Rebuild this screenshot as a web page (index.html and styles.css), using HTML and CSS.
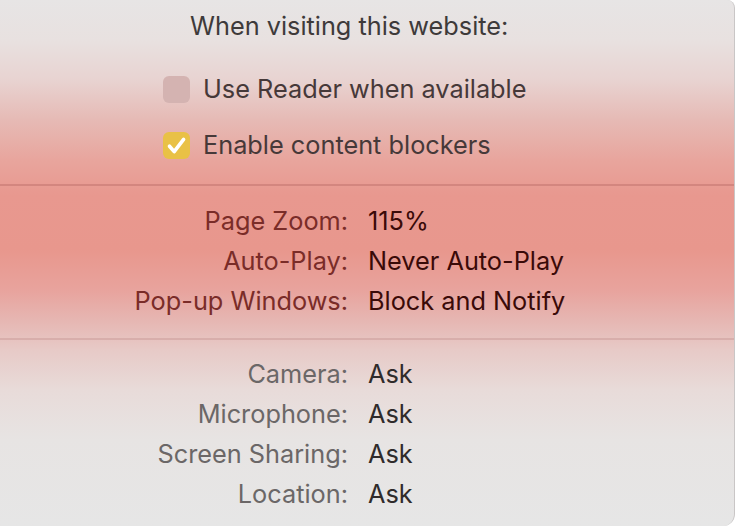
FILE: index.html
```html
<!DOCTYPE html>
<html lang="en">
<head>
<meta charset="utf-8">
<title>Website settings</title>
<link rel="stylesheet" href="styles.css">
</head>
<body>
<div class="panel">
  <div class="title">When visiting this website:</div>
  <div class="checks">
    <div class="check-row">
      <span class="box"></span>
      <span class="check-label">Use Reader when available</span>
    </div>
    <div class="check-row">
      <span class="box on">
        <svg viewBox="0 0 27 27" width="27" height="27"><path d="M6.5 14.2 L11.2 19.6 L20.6 7.4" fill="none" stroke="#fff" stroke-width="3.6" stroke-linecap="round" stroke-linejoin="round"/></svg>
      </span>
      <span class="check-label">Enable content blockers</span>
    </div>
  </div>
  <div class="sep sep-a"></div>
  <div class="grid grid-a">
    <div class="label">Page Zoom:</div><div class="value">115%</div>
    <div class="label">Auto-Play:</div><div class="value">Never Auto-Play</div>
    <div class="label">Pop-up Windows:</div><div class="value">Block and Notify</div>
  </div>
  <div class="sep sep-b"></div>
  <div class="grid grid-b">
    <div class="label">Camera:</div><div class="value">Ask</div>
    <div class="label">Microphone:</div><div class="value">Ask</div>
    <div class="label">Screen Sharing:</div><div class="value">Ask</div>
    <div class="label">Location:</div><div class="value">Ask</div>
  </div>
</div>
</body>
</html>
```
FILE: styles.css
```css
html, body {
  margin: 0;
  padding: 0;
  background: #ffffff;
}
body {
  width: 736px;
  height: 526px;
  overflow: hidden;
  font-family: Inter, "Noto Sans", "Liberation Sans", sans-serif;
  font-size: 25.3px;
}
.panel {
  box-sizing: border-box;
  width: 735px;
  height: 526px;
  padding-top: 6px;
  border-right: 1px solid #c9c6c6;
  border-radius: 0 8px 12px 0;
  background: linear-gradient(to bottom,
    #e7e5e5 0px,
    #e8e1e0 40px,
    #e8d3d1 80px,
    #e6bab5 120px,
    #e8a59d 160px,
    #e8988f 195px,
    #e8978d 250px,
    #e8a39d 290px,
    #e6b6b2 320px,
    #e7cac7 350px,
    #e8dbd9 390px,
    #e7e4e3 440px,
    #e6e6e6 526px);
}
.title {
  height: 40px;
  line-height: 40px;
  padding-left: 190px;
  color: #3e3a3a;
}
.checks {
  margin-top: 23px;
  padding-left: 163px;
  display: flex;
  flex-direction: column;
  gap: 16px;
}
.check-row {
  height: 40px;
  line-height: 40px;
  display: flex;
  align-items: center;
  gap: 13px;
}
.box {
  box-sizing: border-box;
  width: 27px;
  height: 27px;
  border-radius: 6px;
  background: #d4b3b1;
  display: flex;
}
.box.on {
  background: #e9c146;
}
.check-label {
  color: #463939;
}
.sep {
  height: 2px;
}
.sep-a {
  margin-top: 19px;
  background: #d3867f;
}
.sep-b {
  margin-top: 17px;
  background: #d8aeab;
}
.grid {
  display: grid;
  grid-template-columns: 348px 1fr;
  column-gap: 20px;
  line-height: 40px;
}
.label {
  text-align: right;
}
.grid-a {
  margin-top: 15px;
}
.grid-a .label {
  color: #7a2c28;
}
.grid-a .value {
  color: #3a0a08;
}
.grid-b {
  margin-top: 14px;
}
.grid-b .label {
  color: #6b6767;
}
.grid-b .value {
  color: #2f2b2b;
}
```
